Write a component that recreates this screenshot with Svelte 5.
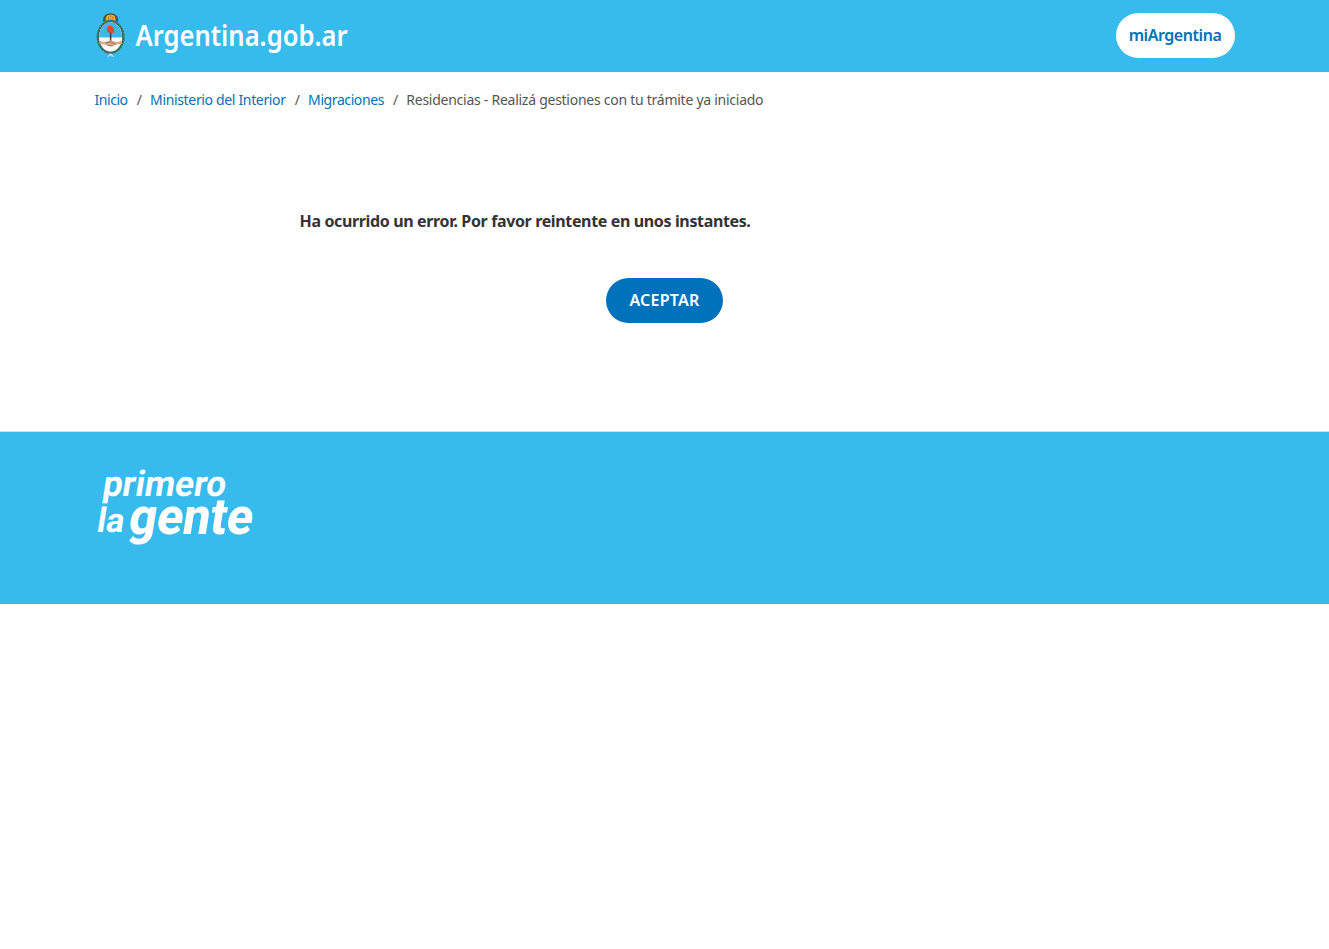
<script>
  const trail = [
    { name: 'Inicio', tracking: -0.45 },
    { name: 'Ministerio del Interior', tracking: -0.34 },
    { name: 'Migraciones', tracking: -0.41 }
  ];
</script>

<header>
  <div class="container bar">
    <a class="brand" href="#inicio" aria-label="Argentina.gob.ar">
      <svg width="300" height="60" viewBox="0 -5 300 60">
        <g transform="translate(-.4 -1.6)">
          <ellipse cx="16" cy="27.7" rx="12.8" ry="15.6" fill="none" stroke="#2f6655" stroke-width="2.3" />
          <ellipse cx="16" cy="27.7" rx="13.3" ry="16.1" fill="none" stroke="#5d9460" stroke-width="1.2" stroke-dasharray="1.3 1.5" />
          <path d="M8.500 12.500C6.500 1 25.500 1 23.500 12.500Q16 8.500 8.500 12.500Z" fill="#49534a" />
          <path d="M11 11Q10.500 5 16 5T21 11Q16 9 11 11Z" fill="#ecb525" />
          <path d="M13.800 7.300v2M18.200 7.300v2M16 6v2" stroke="#8e6418" stroke-width=".9" />
          <ellipse cx="16" cy="27.5" rx="11.500" ry="14.700" fill="#fff" />
          <path d="M4.500 28C4.500 19 10 12.800 16 12.800S27.500 19 27.500 28Z" fill="#43b5e8" />
          <path d="M16 21v13" stroke="#453638" stroke-width="1.500" />
          <path d="M12.300 21Q12.300 15.800 16.500 16.500Q20 17.300 19.800 23.800L16.500 22.800Q13.500 24.500 12.300 21Z" fill="#df4935" />
          <path d="M4.800 31L9 32.500 13 31.500 16 31 19 31.800 23 32.500 27.200 31V34.500L22 35 18 37 13 36 10 35 5 34.500Z" fill="#dbab88" />
          <path d="M11 34L16 32.500 21 34.800M13 36L18 36.500" stroke="#86614d" stroke-width=".8" fill="none" />
          <path d="M13 47.500L16.500 44.500 19 47.500M14.500 44.500L17 46.500" stroke="#e8f7fe" stroke-width=".9" fill="none" />
        </g>
        <text x="40.500" y="34.500" textLength="212" lengthAdjust="spacingAndGlyphs">Argentina.gob.ar</text>
      </svg>
    </a>
    <a class="login" href="#mi">miArgentina</a>
  </div>
</header>

<nav class="container">
  <ol>
    {#each trail as item}
      <li><a href="#{item.name}" style="letter-spacing: {item.tracking}px">{item.name}</a><span class="slash">/</span></li>
    {/each}
    <li class="current">Residencias - Realizá gestiones con tu trámite ya iniciado</li>
  </ol>
</nav>

<main class="container">
  <p>Ha ocurrido un error. Por favor reintente en unos instantes.</p>
  <button>ACEPTAR</button>
</main>

<footer>
  <div class="container">
    <svg class="slogan" width="240" height="110" viewBox="0 0 240 110" aria-label="primero la gente">
      <g transform="skewX(-9)">
        <text x="11.500" y="32" font-size="36" textLength="123" lengthAdjust="spacingAndGlyphs">primero</text>
        <text x="11.500" y="68" font-size="34" textLength="27" lengthAdjust="spacingAndGlyphs">la</text>
        <text class="heavy" x="43.500" y="70.500" font-size="51" textLength="123.500" lengthAdjust="spacingAndGlyphs">gente</text>
      </g>
    </svg>
  </div>
</footer>

<style>
  :global(body) {
    margin: 0;
    background: #fff;
    color: #333;
    font-family: "Noto Sans", "Open Sans", sans-serif;
  }
  a { color: #0072bb; text-decoration: none; }
  .container { width: 1140px; margin: 0 auto; }
  header { height: 72px; background: #37bbed; }
  .bar { height: 71px; display: flex; align-items: center; justify-content: space-between; }
  .brand { display: block; height: 60px; }
  .brand text { fill: #fff; font-size: 28.5px; font-weight: 600; }
  .login {
    box-sizing: border-box; width: 119px; height: 45px; border-radius: 23px;
    background: #fff; text-align: center; line-height: 45px;
    font-size: 16px; font-weight: 600; letter-spacing: -.45px;
  }
  ol {
    display: flex; margin: 0; padding: 18px 0 0; list-style: none;
    font-size: 14px; line-height: 20px; white-space: nowrap; color: #555;
  }
  .slash { padding: 0 8.2px 0 9px; }
  .current { letter-spacing: -.26px; }
  main { height: 321px; display: flex; flex-direction: column; align-items: center; }
  p {
    box-sizing: border-box; width: 730px; margin: 99px 0 0;
    font-size: 16px; line-height: 24px; font-weight: 700;
    letter-spacing: -.36px; white-space: nowrap;
  }
  button {
    width: 117px; height: 45px; margin-top: 45px; padding: 0 0 2px;
    border: 0; border-radius: 23px; background: #0072bb; color: #fff;
    font: 600 16px "Noto Sans", sans-serif; letter-spacing: .25px;
  }
  footer { box-sizing: border-box; height: 173px; padding-top: 32px; border-top: 1px solid #ddd; background: #37bbed; }
  .slogan { display: block; }
  .slogan text { fill: #fff; font-family: Roboto, sans-serif; font-weight: 700; }
  .slogan .heavy { font-weight: 800; }
</style>
